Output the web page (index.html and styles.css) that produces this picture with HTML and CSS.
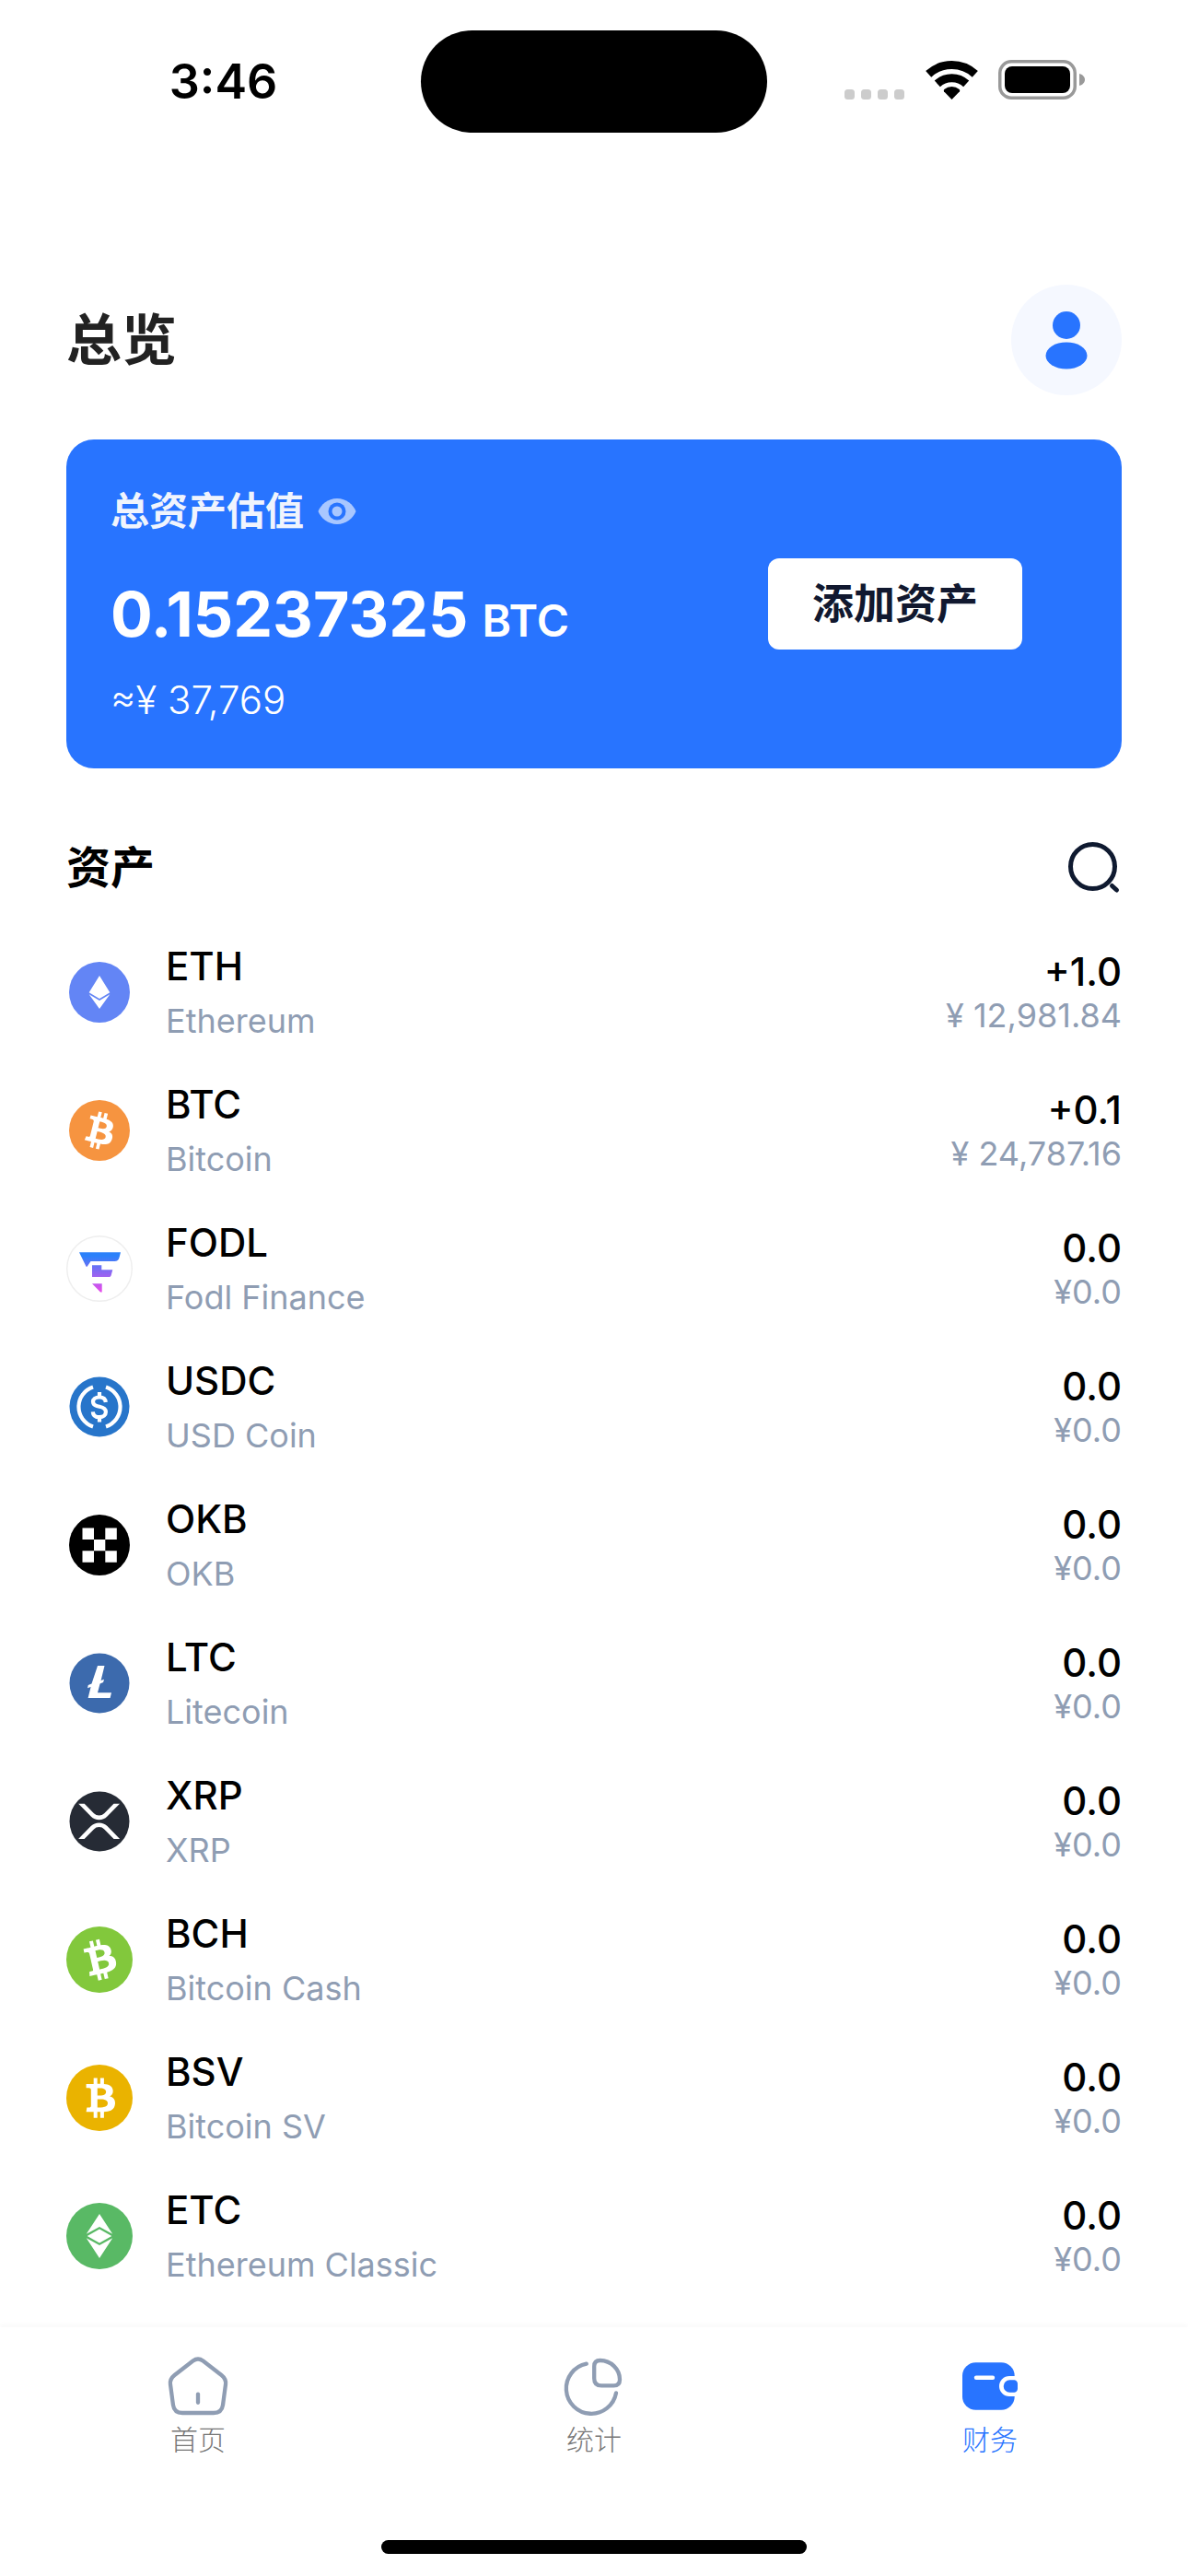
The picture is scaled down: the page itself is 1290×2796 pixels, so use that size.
FILE: index.html
```html
<!DOCTYPE html>
<html lang="zh-CN">
<head>
<meta charset="utf-8">
<meta name="viewport" content="width=device-width, initial-scale=1">
<title>总览</title>
<link rel="stylesheet" href="styles.css">
</head>
<body>
<svg class="defs" width="0" height="0" aria-hidden="true">
  <defs>
    <path id="bitcoin-mark" fill="#fff" d="M23.189 14.02c.314-2.096-1.283-3.223-3.465-3.975l.708-2.84-1.728-.43-.69 2.765c-.454-.114-.92-.22-1.385-.326l.695-2.783L15.596 6l-.708 2.839c-.376-.086-.746-.17-1.104-.26l.002-.009-2.384-.595-.46 1.846s1.283.294 1.256.312c.7.175.826.638.805 1.006l-.806 3.235c.048.012.11.03.18.057l-.183-.045-1.13 4.532c-.086.212-.303.531-.793.41.018.025-1.256-.313-1.256-.313l-.858 1.978 2.25.561c.418.105.828.215 1.231.318l-.715 2.872 1.727.43.708-2.84c.472.127.93.245 1.378.357l-.706 2.828 1.728.43.715-2.866c2.948.558 5.164.333 6.097-2.333.752-2.146-.037-3.385-1.588-4.192 1.13-.26 1.98-1.003 2.207-2.538zm-3.95 5.538c-.533 2.147-4.148.986-5.32.695l.95-3.805c1.172.293 4.929.872 4.37 3.11zm.535-5.569c-.487 1.953-3.495.96-4.47.717l.86-3.45c.975.243 4.118.696 3.61 2.733z"/>
    <linearGradient id="fodl-fill" gradientUnits="userSpaceOnUse" x1="0" y1="18" x2="0" y2="62">
      <stop offset="0.1" stop-color="#2c81fa"/>
      <stop offset="0.5" stop-color="#8a68f2"/>
      <stop offset="1" stop-color="#ea4bea"/>
    </linearGradient>
  </defs>
</svg>

<div class="status-bar">
  <time class="status-time">3:46</time>
  <div class="island"></div>
  <div class="status-icons">
    <svg width="66" height="42" viewBox="0 0 66 42" fill="#ccc" aria-hidden="true">
      <rect x="0" y="31" width="11" height="11" rx="3.5"/><rect x="18" y="31" width="11" height="11" rx="3.5"/><rect x="36" y="31" width="11" height="11" rx="3.5"/><rect x="54" y="31" width="11" height="11" rx="3.5"/>
    </svg>
    <svg width="57" height="42" viewBox="0 0 57 42" aria-hidden="true">
      <g fill="none" stroke="#000" stroke-width="9"><path d="M3.2 14.4A37.5 37.5 0 0 1 53.8 14.4"/><path d="M12.8 24.9A23.2 23.2 0 0 1 44.2 24.9"/></g>
      <path d="M28.5 42L20 33.2A2 2 0 0 1 20.300 30.900A13.300 13.300 0 0 1 36.700 30.900A2 2 0 0 1 37 33.200Z"/>
    </svg>
    <svg width="95" height="43" viewBox="0 0 95 43" aria-hidden="true">
      <rect x="1.75" y="1.75" width="81.500" height="39.500" rx="12.500" fill="none" stroke="#999" stroke-width="3.500"/>
      <rect x="7" y="7" width="71" height="29" rx="8"/>
      <path d="M88 15C92 16 94 19 94 21.500S92 27 88 28Z" fill="#999"/>
    </svg>
  </div>
</div>

<main class="content">
  <header class="page-head">
    <h1 class="page-title">总览</h1>
    <button class="avatar" type="button" aria-label="个人中心">
      <svg width="120" height="120" viewBox="0 0 120 120" fill="#2874ff" aria-hidden="true">
        <circle cx="60" cy="44" r="15"/><ellipse cx="60" cy="77" rx="22.500" ry="14.500"/>
      </svg>
    </button>
  </header>

  <section class="card">
    <div class="card-info">
      <div class="card-label">
        <span>总资产估值</span>
        <button class="eye" type="button" aria-label="隐藏金额">
          <svg width="42" height="30" viewBox="0 0 42 30" aria-hidden="true">
            <path fill="#a9c7ff" d="M21 1C11 1 3.500 7.500 .5 15C3.500 22.500 11 29 21 29S38.500 22.500 41.500 15C38.500 7.500 31 1 21 1Z"/>
            <circle cx="21" cy="15" r="9.500" fill="#2874ff"/><circle cx="21" cy="15" r="5.500" fill="#a9c7ff"/>
          </svg>
        </button>
      </div>
      <p class="card-amount"><span>0.15237325</span><span class="card-unit">BTC</span></p>
      <p class="card-fiat">≈¥ 37,769</p>
    </div>
    <button class="add-button" type="button">添加资产</button>
  </section>

  <section>
    <div class="section-head">
      <h2 class="section-title">资产</h2>
      <button class="search" type="button" aria-label="搜索">
        <svg width="60" height="60" viewBox="0 0 60 60" fill="none" stroke="#0f1a30" stroke-width="5" stroke-linecap="round" aria-hidden="true">
          <circle cx="28.500" cy="28.500" r="24"/><path d="M49.500 49.500L54.500 54"/>
        </svg>
      </button>
    </div>

    <ul class="assets">
      <li class="asset">
        <svg class="coin" viewBox="0 0 72 72" aria-hidden="true"><circle cx="36" cy="36" r="33" fill="#6385f5"/><path fill="#fff" d="M36 18L47.300 36.300L36 43L24.700 36.300ZM24.700 38.300L36 45L47.300 38.300L36 54Z"/></svg>
        <div class="names"><span class="primary">ETH</span><span class="secondary">Ethereum</span></div>
        <div class="values"><span class="primary">+1.0</span><span class="secondary">¥ 12,981.84</span></div>
      </li>
      <li class="asset">
        <svg class="coin" viewBox="0 0 72 72" aria-hidden="true"><circle cx="36" cy="36" r="33" fill="#f69440"/><use href="#bitcoin-mark" transform="translate(3 3) scale(2.0625)"/></svg>
        <div class="names"><span class="primary">BTC</span><span class="secondary">Bitcoin</span></div>
        <div class="values"><span class="primary">+0.1</span><span class="secondary">¥ 24,787.16</span></div>
      </li>
      <li class="asset">
        <svg class="coin" viewBox="0 0 72 72" aria-hidden="true"><circle cx="36" cy="36" r="35.300" fill="#fff" stroke="#eee" stroke-width="1.400"/><path fill="url(#fodl-fill)" d="M14 18.300H59L57.500 24Q56.500 28 52.500 28H26.500L22.800 33.500Q22 34.500 21.300 33.300ZM28 32.200H38.300V37.200H50.300L48.600 43.500Q48 45 46.500 45H28ZM28 52.200H38.700V61.500H37Z"/></svg>
        <div class="names"><span class="primary">FODL</span><span class="secondary">Fodl Finance</span></div>
        <div class="values"><span class="primary">0.0</span><span class="secondary">¥0.0</span></div>
      </li>
      <li class="asset">
        <svg class="coin" viewBox="0 0 72 72" aria-hidden="true"><circle cx="36" cy="36" r="32.500" fill="#2775ca"/><g fill="none" stroke="#fff" stroke-width="4.200"><path d="M29 14.600A22.500 22.500 0 0 0 29 57.400M43 14.600A22.500 22.500 0 0 1 43 57.400M36 20V26M36 47V52.500"/><path d="M42.800 31C42.500 27.500 40 25.500 36 25.500C31.500 25.500 29 27.800 29 30.500C29 34.500 32.800 35.200 36 35.800C40 36.600 42.900 37.600 42.900 41.500C42.900 45 40 47.200 36 47.200C31.500 47.200 29 45 28.800 41.300"/></g></svg>
        <div class="names"><span class="primary">USDC</span><span class="secondary">USD Coin</span></div>
        <div class="values"><span class="primary">0.0</span><span class="secondary">¥0.0</span></div>
      </li>
      <li class="asset">
        <svg class="coin" viewBox="0 0 72 72" aria-hidden="true"><circle cx="36" cy="36" r="33"/><path fill="#fff" d="M17.500 17.500H30V30H17.500ZM42.300 17.500H54.800V30H42.300ZM30 30H42.300V42.300H30ZM17.500 42.300H30V54.800H17.500ZM42.300 42.300H54.800V54.800H42.300Z"/></svg>
        <div class="names"><span class="primary">OKB</span><span class="secondary">OKB</span></div>
        <div class="values"><span class="primary">0.0</span><span class="secondary">¥0.0</span></div>
      </li>
      <li class="asset">
        <svg class="coin" viewBox="0 0 72 72" aria-hidden="true"><circle cx="36" cy="36" r="32.500" fill="#3c6aad"/><path fill="#fff" d="M34 17H41.500L37.600 33L41 31.800L40.100 35L36.600 36.400L34 46.200H49L47.600 52H23.600L26.600 39.900L23 41.300L23.800 38L27.500 36.600Z"/></svg>
        <div class="names"><span class="primary">LTC</span><span class="secondary">Litecoin</span></div>
        <div class="values"><span class="primary">0.0</span><span class="secondary">¥0.0</span></div>
      </li>
      <li class="asset">
        <svg class="coin" viewBox="0 0 72 72" aria-hidden="true"><circle cx="36" cy="36" r="32.500" fill="#262b35"/><path fill="#fff" transform="translate(-.4 -1.600) scale(2.250 2.300)" d="M23.070 8h2.890l-6.015 5.957a5.621 5.621 0 0 1-7.890 0L6.035 8H8.930l4.570 4.523a3.556 3.556 0 0 0 4.996 0L23.070 8zM8.895 24.563H6l6.055-5.993a5.621 5.621 0 0 1 7.890 0L26 24.563h-2.895L18.500 20a3.556 3.556 0 0 0-4.996 0l-4.610 4.563z"/></svg>
        <div class="names"><span class="primary">XRP</span><span class="secondary">XRP</span></div>
        <div class="values"><span class="primary">0.0</span><span class="secondary">¥0.0</span></div>
      </li>
      <li class="asset">
        <svg class="coin" viewBox="0 0 72 72" aria-hidden="true"><circle cx="36" cy="36" r="36" fill="#82c83c"/><use href="#bitcoin-mark" transform="scale(2.250) rotate(-27 16 16)"/></svg>
        <div class="names"><span class="primary">BCH</span><span class="secondary">Bitcoin Cash</span></div>
        <div class="values"><span class="primary">0.0</span><span class="secondary">¥0.0</span></div>
      </li>
      <li class="asset">
        <svg class="coin" viewBox="0 0 72 72" aria-hidden="true"><circle cx="36" cy="36" r="36" fill="#eab300"/><use href="#bitcoin-mark" transform="scale(2.250) rotate(-14 16 16)"/></svg>
        <div class="names"><span class="primary">BSV</span><span class="secondary">Bitcoin SV</span></div>
        <div class="values"><span class="primary">0.0</span><span class="secondary">¥0.0</span></div>
      </li>
      <li class="asset">
        <svg class="coin" viewBox="0 0 72 72" aria-hidden="true"><circle cx="36" cy="36" r="36" fill="#59b965"/><path fill="#fff" d="M36 12L50.200 33.700L36 26L21.800 33.700ZM22.700 36L36 28.500L49.300 36L36 43.500ZM21.800 38.300L36 46L50.200 38.300L36 60Z"/></svg>
        <div class="names"><span class="primary">ETC</span><span class="secondary">Ethereum Classic</span></div>
        <div class="values"><span class="primary">0.0</span><span class="secondary">¥0.0</span></div>
      </li>
    </ul>
  </section>
</main>

<footer class="bottom">
  <nav class="tabs">
    <a class="tab" href="#home">
      <svg class="tab-icon" viewBox="0 0 72 72" fill="none" stroke="#8f9db3" stroke-width="4.300" stroke-linecap="round" aria-hidden="true">
        <path d="M30.500 8.500Q36 4.500 41.500 8.500L61.500 24Q66.800 28.200 66 34L63 56.500Q61.800 65 53 65H19Q10.200 65 9 56.500L6 34Q5.200 28.200 10.500 24Z"/><path d="M36 44.600V53.800"/>
      </svg>
      <span>首页</span>
    </a>
    <a class="tab" href="#stats">
      <svg class="tab-icon" viewBox="0 0 72 72" fill="none" stroke="#8f9db3" stroke-width="4.300" stroke-linecap="round" aria-hidden="true">
        <path d="M27.800 11.700A27.300 27.300 0 1 0 60 43.400"/><path d="M36.200 14.500Q36.200 8 42.700 8C54.200 8 64 17.500 64 28.800Q64 35.400 57.500 35.400H44.200Q36.200 35.400 36.200 27.500Z"/>
      </svg>
      <span>统计</span>
    </a>
    <a class="tab tab-active" href="#finance" aria-current="page">
      <svg class="tab-icon" viewBox="0 0 72 72" aria-hidden="true">
        <rect x="6" y="10.300" width="56.700" height="51.400" rx="14.500" fill="#2874ff"/>
        <path d="M21 26.800H39" stroke="#fff" stroke-width="4.400" stroke-linecap="round"/>
        <path fill="#fff" d="M70 25H57A11 11 0 0 0 57 47H70Z"/>
        <path fill="#2874ff" d="M57.400 29.300H62.500Q66 30 66 33.500V38.500Q66 42 62.500 42.700H57.400A6.700 6.700 0 0 1 57.400 29.300Z"/>
      </svg>
      <span>财务</span>
    </a>
  </nav>
  <div class="home-indicator"></div>
</footer>
</body>
</html>
```

FILE: styles.css
```css
* {
  box-sizing: border-box;
}

body {
  margin: 0;
  min-height: 100vh;
  display: flex;
  flex-direction: column;
  background: #fff;
  color: #000;
  font-family: Inter, "Noto Sans CJK SC", sans-serif;
}

h1, h2, p, ul {
  margin: 0;
  padding: 0;
}

button {
  padding: 0;
  border: 0;
  background: none;
  color: inherit;
  font: inherit;
  cursor: pointer;
}

svg {
  display: block;
}

.defs {
  position: absolute;
}

/* Status bar */
.status-bar {
  display: grid;
  grid-template-columns: 1fr 376px 1fr;
  align-items: center;
  padding: 33px 0;
}

.status-time {
  padding-left: 28px;
  text-align: center;
  font-size: 52px;
  line-height: 60px;
  font-weight: 600;
}

.island {
  height: 111px;
  border-radius: 56px;
  background: #000;
}

.status-icons {
  display: flex;
  justify-content: center;
  align-items: center;
  gap: 22px;
  padding-right: 28px;
  padding-bottom: 4px;
}

/* Page */
.content {
  padding: 132px 72px 24px;
}

.page-head {
  display: flex;
  justify-content: space-between;
  align-items: center;
  margin-bottom: 48px;
}

.page-title {
  font-size: 60px;
  line-height: 72px;
  font-weight: 700;
  color: #222;
}

.avatar {
  border-radius: 50%;
  background: #f5f8ff;
}

.card {
  display: flex;
  justify-content: space-between;
  align-items: center;
  padding: 48px 108px 48px 48px;
  border-radius: 30px;
  background: #2874ff;
  color: #fff;
}

.card-label {
  display: flex;
  align-items: center;
  gap: 15px;
  font-size: 42px;
  line-height: 60px;
  font-weight: 700;
  color: #f0f4fd;
}

.card-amount {
  display: flex;
  align-items: baseline;
  gap: 15px;
  margin-top: 41px;
  font-size: 68px;
  line-height: 80px;
  font-weight: 700;
}

.card-unit {
  font-size: 48px;
  line-height: 48px;
  font-weight: 600;
}

.card-fiat {
  margin-top: 28px;
  font-size: 42px;
  line-height: 52px;
  font-weight: 300;
}

.add-button {
  padding: 20px 48px 19px;
  border-radius: 12px;
  background: #fff;
  color: #11182f;
  font-size: 45px;
  line-height: 60px;
  font-weight: 700;
}

.section-head {
  display: flex;
  justify-content: space-between;
  align-items: center;
  height: 120px;
  margin-top: 48px;
}

.section-title {
  font-size: 48px;
  line-height: 60px;
  font-weight: 700;
}

/* Asset list */
.assets {
  list-style: none;
}

.asset {
  display: flex;
  align-items: center;
  gap: 36px;
  height: 150px;
}

.coin {
  width: 72px;
  height: 72px;
}

.names,
.values {
  display: flex;
  flex-direction: column;
}

.names {
  flex: 1;
  gap: 12px;
}

.values {
  text-align: right;
}

.primary {
  font-size: 42px;
  line-height: 50px;
  font-weight: 500;
}

.secondary {
  font-size: 36px;
  line-height: 44px;
  color: #8f9db3;
}

/* Tab bar */
.bottom {
  margin-top: auto;
  padding: 28px 0 24px;
  background: #fff;
  box-shadow: 0 -4px 4px rgba(0, 0, 0, 0.02);
}

.tabs {
  display: grid;
  grid-template-columns: repeat(3, 1fr);
}

.tab {
  display: flex;
  flex-direction: column;
  align-items: center;
  gap: 4px;
  color: #777;
  font-size: 30px;
  line-height: 36px;
  font-weight: 300;
  text-decoration: none;
}

.tab-active {
  color: #2874ff;
}

.tab-icon {
  width: 72px;
  height: 72px;
}

.home-indicator {
  width: 462px;
  height: 15px;
  margin: 91px auto 0;
  border-radius: 8px;
  background: #000;
}
```
